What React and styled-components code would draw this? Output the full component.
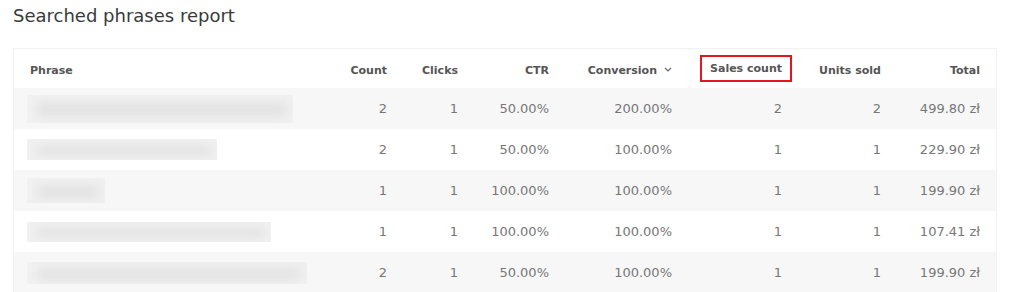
import React from "react";
import styled, { createGlobalStyle } from "styled-components";

const GlobalStyle = createGlobalStyle`
  body {
    margin: 0;
    background: #ffffff;
    font-family: "DejaVu Sans", "Noto Sans", sans-serif;
  }
`;

const rows = [
  { blur: [266, 28], count: 2, clicks: 1, ctr: "50.00%", conv: "200.00%", sales: 2, units: 2, total: "499.80 zł" },
  { blur: [190, 21], count: 2, clicks: 1, ctr: "50.00%", conv: "100.00%", sales: 1, units: 1, total: "229.90 zł" },
  { blur: [78, 25], count: 1, clicks: 1, ctr: "100.00%", conv: "100.00%", sales: 1, units: 1, total: "199.90 zł" },
  { blur: [244, 20], count: 1, clicks: 1, ctr: "100.00%", conv: "100.00%", sales: 1, units: 1, total: "107.41 zł" },
  { blur: [280, 22], count: 2, clicks: 1, ctr: "50.00%", conv: "100.00%", sales: 1, units: 1, total: "199.90 zł" },
];

function App() {
  return (
    <>
      <GlobalStyle />
      <Page>
        <Title>Searched phrases report</Title>
        <Card>
          <HeadRow>
            <HeadCell align="left">
              <Label>Phrase</Label>
            </HeadCell>
            <HeadCell>
              <Label>Count</Label>
            </HeadCell>
            <HeadCell>
              <Label>Clicks</Label>
            </HeadCell>
            <HeadCell>
              <Label>CTR</Label>
            </HeadCell>
            <HeadCell>
              <Label>
                Conversion
                <svg width="8" height="5" viewBox="0 0 8 5" style={{ marginLeft: 7, marginBottom: 3 }}>
                  <path d="M1 1 L4 4 L7 1" fill="none" stroke="#666" strokeWidth="1.1" />
                </svg>
              </Label>
            </HeadCell>
            <HeadCell>
              <Label marked>Sales count</Label>
            </HeadCell>
            <HeadCell>
              <Label>Units sold</Label>
            </HeadCell>
            <HeadCell last>
              <Label>Total</Label>
            </HeadCell>
          </HeadRow>
          {rows.map((r, i) => (
            <Row key={i} striped={i % 2 === 0}>
              <PhraseCell>
                <Blurred style={{ width: r.blur[0], height: r.blur[1] }} />
              </PhraseCell>
              <Cell>{r.count}</Cell>
              <Cell>{r.clicks}</Cell>
              <Cell>{r.ctr}</Cell>
              <Cell>{r.conv}</Cell>
              <Cell>{r.sales}</Cell>
              <Cell>{r.units}</Cell>
              <Cell last>{r.total}</Cell>
            </Row>
          ))}
        </Card>
      </Page>
    </>
  );
}

export default App;

const Page = styled.div`
  padding: 0 17px 0 13px;
`;

const Title = styled.h1`
  margin: 0;
  padding-top: 5px;
  height: 43px;
  font-size: 18px;
  font-weight: 400;
  color: #3a3a3a;
  line-height: 22px;
`;

const Card = styled.div`
  border: 1px solid #f1f1f1;
  border-bottom: none;
`;

const columns = "313px 70px 71px 91px 123px 110px 99px 105px";

const HeadRow = styled.div`
  display: grid;
  grid-template-columns: ${columns};
  height: 39px;
  align-items: center;
  background: #ffffff;
`;

const HeadCell = styled.div`
  text-align: ${(p) => p.align || "right"};
  padding-left: ${(p) => (p.align === "left" ? "6px" : "0")};
  padding-right: ${(p) => (p.last ? "6px" : "0")};
`;

const Label = styled.span`
  display: inline-flex;
  align-items: center;
  font-size: 11px;
  font-weight: 700;
  color: #555555;
  padding: ${(p) => (p.marked ? "5px 8px" : "0 10px")};
  border: ${(p) => (p.marked ? "2px solid #e8141b" : "none")};
`;

const Row = styled.div`
  display: grid;
  grid-template-columns: ${columns};
  height: 41px;
  align-items: center;
  background: ${(p) => (p.striped ? "#f7f7f7" : "#ffffff")};
`;

const PhraseCell = styled.div`
  padding-left: 13px;
  display: flex;
  align-items: center;
`;

const Blurred = styled.div`
  position: relative;
  background: #f1f1f1;
  overflow: hidden;
  &::after {
    content: "";
    position: absolute;
    left: 10px;
    right: 6px;
    top: 28%;
    bottom: 18%;
    background: #e3e3e3;
    filter: blur(5px);
  }
`;

const Cell = styled.div`
  text-align: right;
  font-size: 13px;
  font-weight: 400;
  color: #777777;
  padding-right: ${(p) => (p.last ? "16px" : "10px")};
  white-space: nowrap;
`;
